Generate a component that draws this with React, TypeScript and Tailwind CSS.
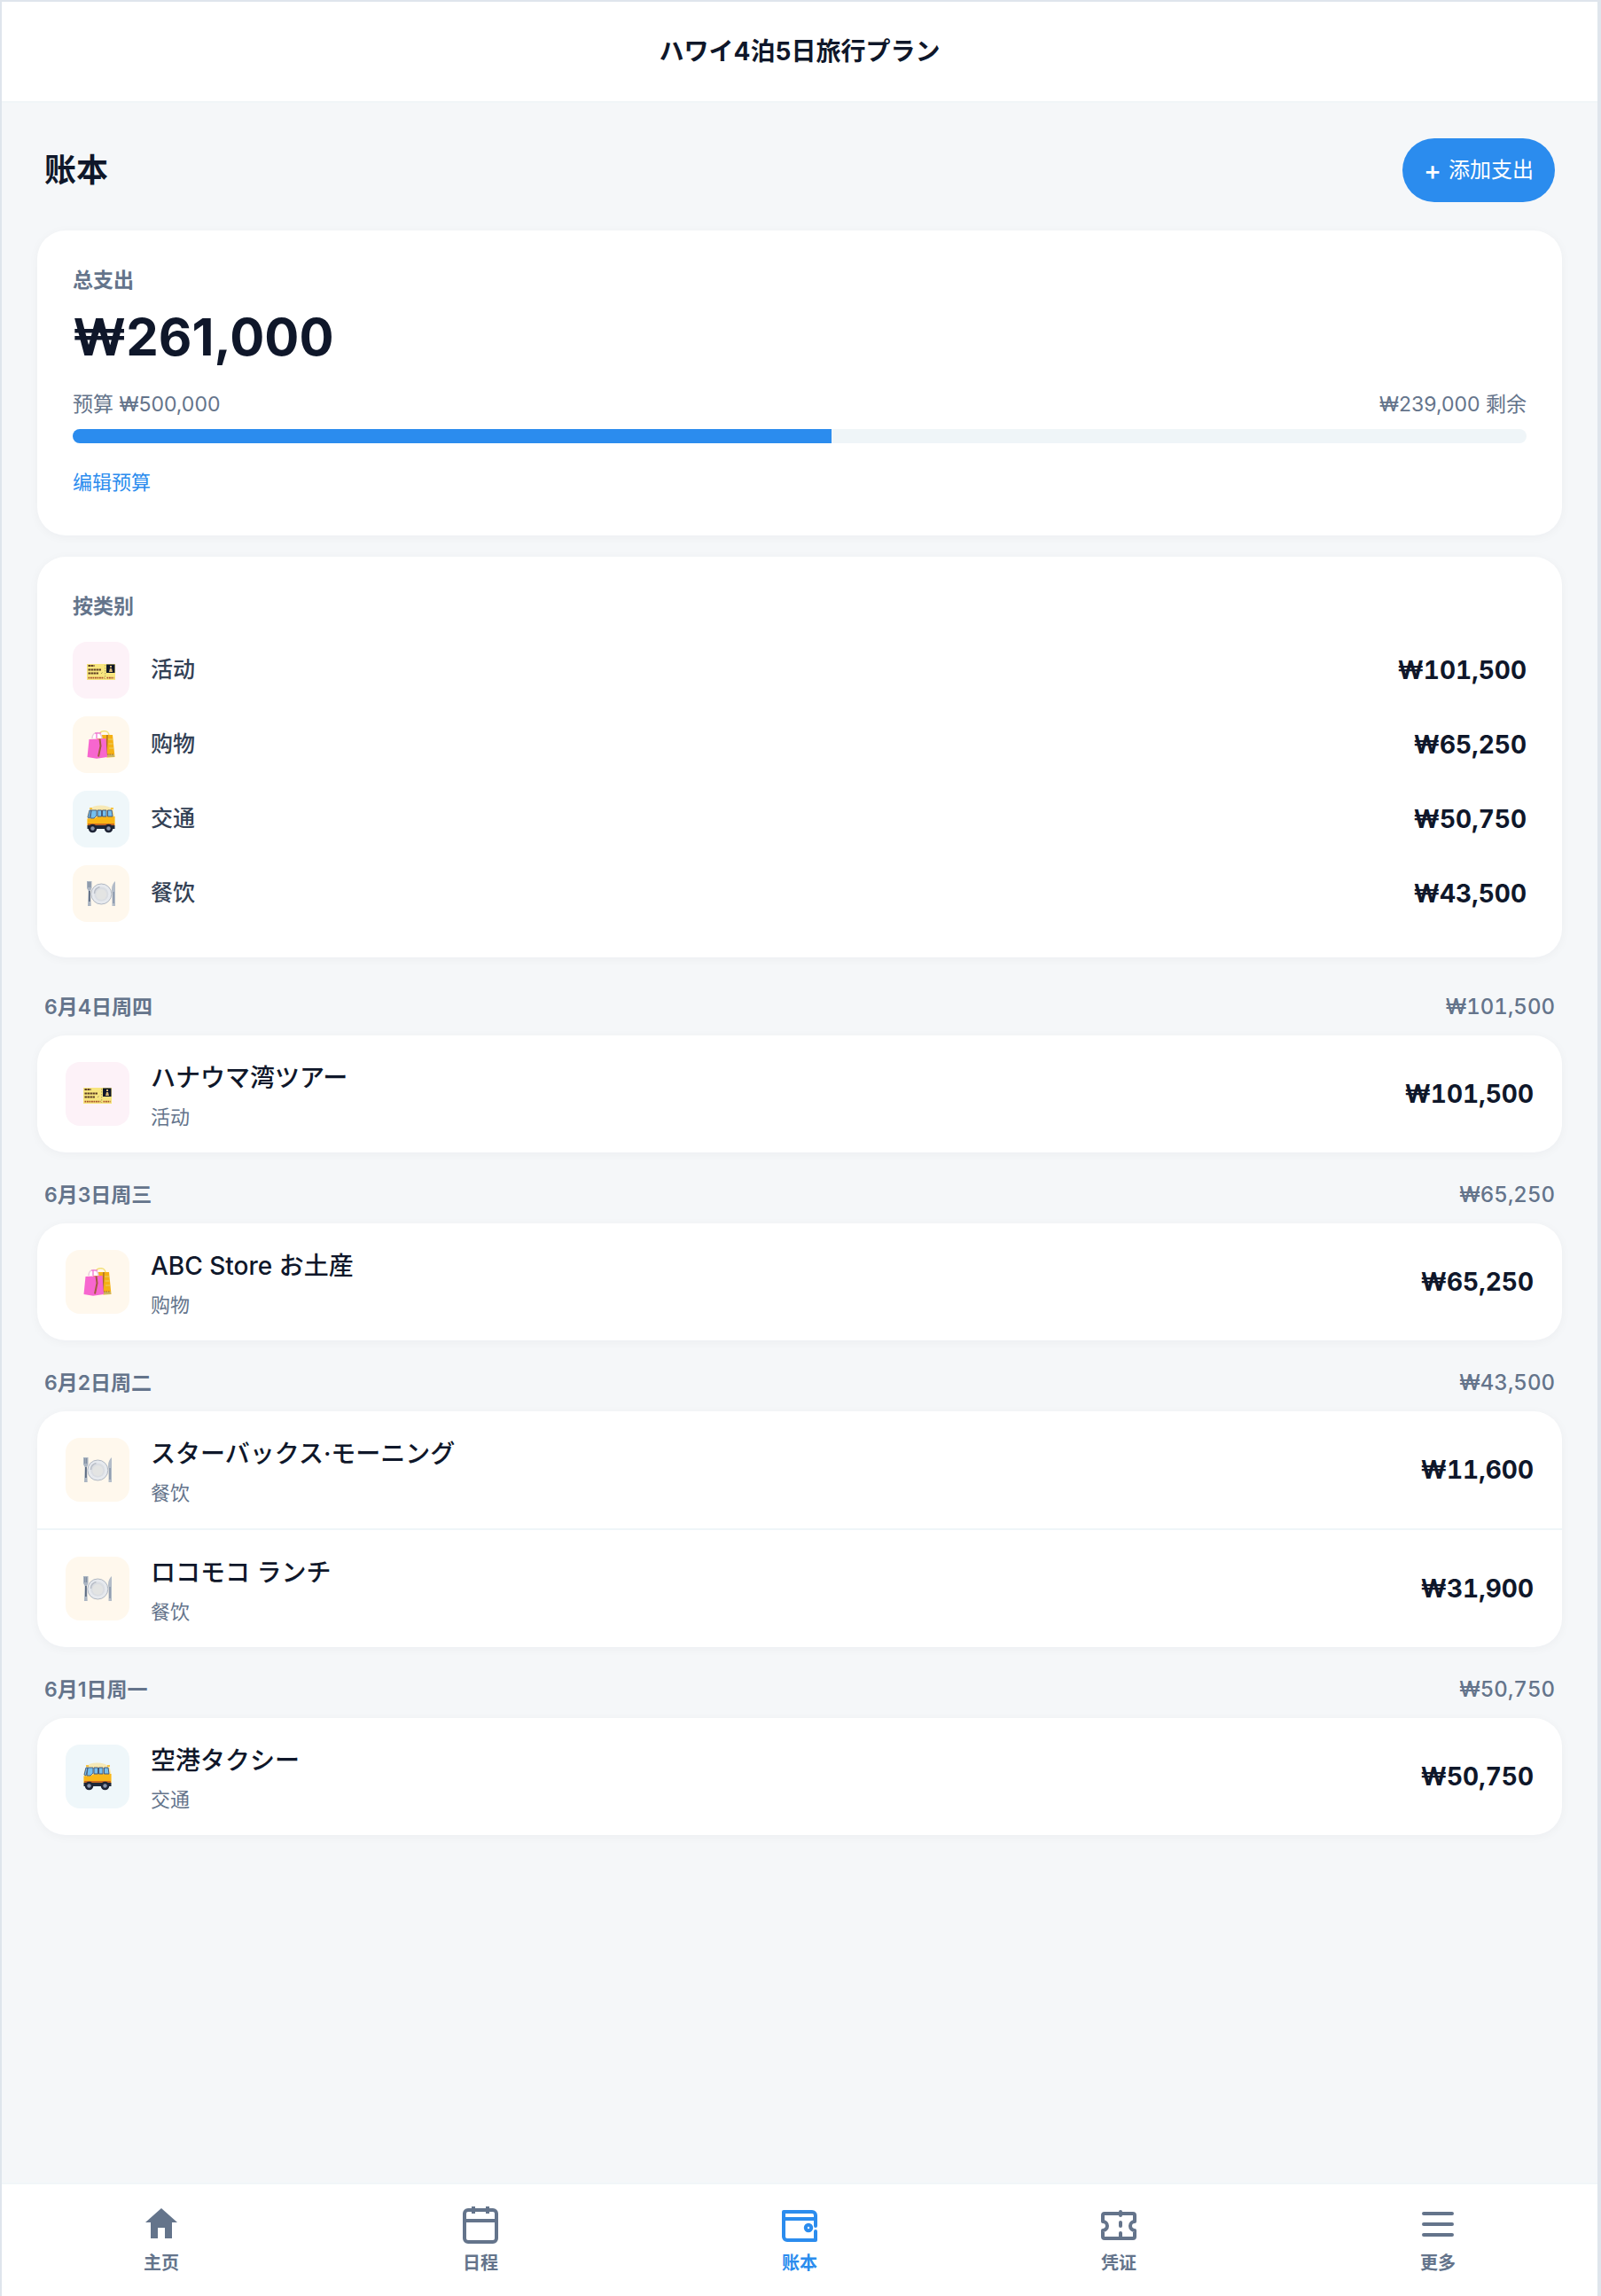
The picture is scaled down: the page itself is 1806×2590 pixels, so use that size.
import type { ReactNode } from "react";

type Category = "activity" | "shopping" | "transport" | "food";

const categories: Record<Category, { label: string; tint: string; icon: ReactNode }> = {
  activity: {
    label: "活动",
    tint: "bg-[#fdf2f8]",
    icon: (
      <svg viewBox="0 -2 32 32" className="w-full h-full" aria-hidden="true">
        <rect x="0" y="7" width="32" height="18" fill="#f7e57e" />
        <rect x="22" y="7.5" width="9.5" height="9.5" fill="#0f1729" />
        <path d="M25 16l1-4h2l1 4z M26 9h2v2h-2z" fill="#d9b878" />
        <path d="M1.500 9h7M1.500 13.500h15M1.500 17.500h12" stroke="#5b3a22" strokeWidth="2" strokeDasharray="2.4 .6" />
        <path d="M1.500 22.700h18M22.500 22.700h8" stroke="#a8502c" strokeWidth="1.8" strokeDasharray="1.8 .7" />
        <path d="M20.700 8v16" stroke="#9a8d50" strokeWidth=".8" strokeDasharray="1.5 1.5" />
        <path d="M16 18l1.500-1.500" stroke="#a79a58" />
      </svg>
    ),
  },
  shopping: {
    label: "购物",
    tint: "bg-[#fff8ed]",
    icon: (
      <svg viewBox="0 0 32 32" className="w-full h-full" aria-hidden="true">
        <path d="M13 6C15-1 25-1 25 6" fill="none" stroke="#f3e07a" strokeWidth="1.6" />
        <path d="M9 5h20l2.500 25-9 .5z" fill="#f5b014" />
        <path d="M23 5l-1 23" stroke="#a8682a" strokeWidth="1.4" />
        <path d="M24 10h5M24.500 15h5M25 20h5" stroke="#e8d06a" strokeWidth="1" />
        <path d="M22.500 27h8.500v3h-8.500z" fill="#cbb560" />
        <path d="M23 27h7" stroke="#a8682a" strokeDasharray="1.5 1" />
        <path d="M6 9C6 1 16 0 17 9" fill="#fff" stroke="#e9c9dc" strokeWidth="1.5" />
        <path d="M9 3h7M11 3v6" stroke="#f564cf" strokeWidth="1.2" />
        <path d="M2.500 10l19-1 1.500 21-12 1.800L.5 30z" fill="#f766cf" />
        <path d="M14.500 9.500l1 8-2.500 12" fill="none" stroke="#a45a3c" strokeWidth="2" />
      </svg>
    ),
  },
  transport: {
    label: "交通",
    tint: "bg-[#eff7fa]",
    icon: (
      <svg viewBox="0 0 32 32" className="w-full h-full" aria-hidden="true">
        <path d="M8 1.500Q16-.5 23 1.500L29 4H4z" fill="#f6e9b8" />
        <path d="M4 4h25q1.500 4 2.500 10v10H.5V14Q1 8 4 4z" fill="#fbe9a8" />
        <path d="M.5 15.500L9 15l3-2h19.500v10H.5z" fill="#f9b617" />
        <path d="M1 14l2-8h2l-2 9zM5 6h6v6l-3 3H4z" fill="#75bfee" stroke="#46597a" strokeWidth=".9" />
        <path d="M12 6h4.500v7H12zM17.500 6H22v7h-4.500zM23.500 6H28l1 7h-5.500z" fill="#75bfee" stroke="#46597a" strokeWidth="1" />
        <path d="M3 4h3M27 4h3" stroke="#f9b617" strokeWidth="1.6" />
        <path d="M.5 23h31v4H.5z" fill="#1e293b" />
        <path d="M1 22h30" stroke="#c96a22" strokeWidth="2" />
        <circle cx="6.5" cy="26.5" r="4.8" fill="#1e2435" />
        <circle cx="6.5" cy="26.5" r="2.2" fill="#8793ab" />
        <circle cx="24.5" cy="26.5" r="4.8" fill="#1e2435" />
        <circle cx="24.5" cy="26.5" r="2.2" fill="#8793ab" />
      </svg>
    ),
  },
  food: {
    label: "餐饮",
    tint: "bg-[#fff8ed]",
    icon: (
      <svg viewBox="0 0 32 32" className="w-full h-full" aria-hidden="true">
        <path d="M0 2h5.500v8L4 13l.7 17H1L1.700 13 0 10z" fill="#aab4c2" />
        <path d="M1.800 3v6M3.700 3v6" stroke="#66758a" strokeWidth=".7" />
        <path d="M2.900 13v12" stroke="#56657c" strokeWidth="1.6" />
        <path d="M28 12c0-5 1.500-8 4-10v28h-3.500V16z" fill="#b3bcc8" />
        <path d="M30 14v13" stroke="#7d8ca2" strokeWidth="1.2" />
        <circle cx="16.3" cy="16.5" r="11.5" fill="#e6e9ee" stroke="#a9b1bc" strokeWidth=".9" />
        <circle cx="16.3" cy="16.5" r="8" fill="#dadde2" />
        <path d="M8.500 16a8 8 0 0 1 6-7.500" fill="none" stroke="#b9bec7" strokeWidth="1.5" />
        <circle cx="16.3" cy="17" r="6" fill="#e3e4e3" />
      </svg>
    ),
  },
};

const totals: { category: Category; amount: number }[] = [
  { category: "activity", amount: 101500 },
  { category: "shopping", amount: 65250 },
  { category: "transport", amount: 50750 },
  { category: "food", amount: 43500 },
];

const days: { date: string; items: { title: string; category: Category; amount: number }[] }[] = [
  { date: "6月4日周四", items: [{ title: "ハナウマ湾ツアー", category: "activity", amount: 101500 }] },
  { date: "6月3日周三", items: [{ title: "ABC Store お土産", category: "shopping", amount: 65250 }] },
  {
    date: "6月2日周二",
    items: [
      { title: "スターバックス·モーニング", category: "food", amount: 11600 },
      { title: "ロコモコ ランチ", category: "food", amount: 31900 },
    ],
  },
  { date: "6月1日周一", items: [{ title: "空港タクシー", category: "transport", amount: 50750 }] },
];

const tabs = [
  {
    label: "主页",
    icon: <path d="M12 3l9 8h-3v9h-4v-6h-4v6H6v-9H3z" fill="currentColor" stroke="none" />,
  },
  {
    label: "日程",
    icon: (
      <>
        <rect x="3" y="4" width="18" height="18" rx="2" />
        <path d="M3 10h18M8 2v4M16 2v4" strokeLinecap="butt" />
      </>
    ),
  },
  {
    label: "账本",
    active: true,
    icon: (
      <>
        <path d="M21 13V7a2 2 0 0 0-2-2H3v14a2 2 0 0 0 2 2h16v-5" />
        <path d="M3 9h17" />
        <circle cx="17" cy="14" r="1.6" />
      </>
    ),
  },
  {
    label: "凭证",
    icon: (
      <>
        <path d="M3 10.500a2.500 2.500 0 0 1 0 5V19a1 1 0 0 0 1 1h16a1 1 0 0 0 1-1v-3.500a2.500 2.500 0 0 1 0-5V7a1 1 0 0 0-1-1H4a1 1 0 0 0-1 1z" />
        <path d="M13 5v2M13 11v2M13 17v2" />
      </>
    ),
  },
  { label: "更多", icon: <path d="M4 6h16M4 12h16M4 18h16" /> },
];

const won = (n: number) => "₩" + n.toLocaleString("en-US");

const budget = 500000;
const spent = totals.reduce((sum, t) => sum + t.amount, 0);

export default function App() {
  return (
    <div className="min-h-screen flex flex-col bg-[#f5f7f9] text-[#0f172a] border-t-2 border-l-2 border-r-4 border-[#dfe5ec] font-['Inter','Noto_Sans_CJK_SC',sans-serif]">
      <header className="h-[114px] shrink-0 bg-white border-b-2 border-[#f1f6f8] flex items-center justify-center">
        <h1 lang="ja" className="text-[28px] font-bold font-['Inter','Noto_Sans_CJK_JP',sans-serif]">ハワイ4泊5日旅行プラン</h1>
      </header>

      <main className="flex-1 px-10 pt-10">
        <div className="flex items-center justify-between px-2 mb-8">
          <h2 className="text-4xl font-bold">账本</h2>
          <button className="h-[72px] px-6 rounded-full bg-[#2b8cee] text-white text-2xl flex items-center gap-2">
            <span className="text-3xl font-medium">+</span>
            添加支出
          </button>
        </div>

        {/* Budget summary */}
        <section className="bg-white rounded-[32px] shadow-[0_2px_12px_rgba(15,23,42,0.04)] p-10 mb-6">
          <h3 className="text-[23px] leading-8 font-semibold text-[#64748b]">总支出</h3>
          <p className="text-[58px] leading-[72px] font-bold mt-3">{won(spent)}</p>
          <div className="flex justify-between text-[23px] leading-8 text-[#64748b] mt-6">
            <span>预算 {won(budget)}</span>
            <span>{won(budget - spent)} 剩余</span>
          </div>
          <div className="h-4 mt-3 rounded-full bg-[#eff5f8] overflow-hidden">
            <div className="h-full bg-[#2b8cee]" style={{ width: `${(spent / budget) * 100}%` }} />
          </div>
          <button className="block mt-6 text-[22px] leading-10 text-[#2b8cee]">编辑预算</button>
        </section>

        {/* Totals by category */}
        <section className="bg-white rounded-[32px] shadow-[0_2px_12px_rgba(15,23,42,0.04)] p-10">
          <h3 className="text-[23px] leading-8 font-semibold text-[#64748b] mb-6">按类别</h3>
          <ul className="flex flex-col gap-5">
            {totals.map((t) => (
              <li key={t.category} className="flex items-center gap-6">
                <span className={`size-16 rounded-2xl flex items-center justify-center ${categories[t.category].tint}`}>
                  <span className="size-8">{categories[t.category].icon}</span>
                </span>
                <span className="flex-1 text-[25px] font-medium text-[#334155]">{categories[t.category].label}</span>
                <span className="text-[28px] font-bold tabular-nums">{won(t.amount)}</span>
              </li>
            ))}
          </ul>
        </section>

        {/* Expenses grouped by day */}
        <div className="flex flex-col gap-8 pt-10 pb-10">
          {days.map((day) => (
            <section key={day.date}>
              <div className="flex justify-between px-2 mb-4 text-[23px] leading-8 text-[#64748b]">
                <h3 className="font-semibold">{day.date}</h3>
                <span className="text-2xl leading-8 font-medium tabular-nums">
                  {won(day.items.reduce((sum, i) => sum + i.amount, 0))}
                </span>
              </div>
              <ul className="bg-white rounded-[32px] shadow-[0_2px_12px_rgba(15,23,42,0.04)] divide-y-2 divide-[#eff5f8]">
                {day.items.map((item) => (
                  <li key={item.title} className="flex items-center gap-6 px-8 py-6">
                    <span className={`size-[72px] rounded-2xl flex items-center justify-center ${categories[item.category].tint}`}>
                      <span className="size-8">{categories[item.category].icon}</span>
                    </span>
                    <div className="flex-1">
                      <p lang="ja" className="text-[28px] leading-[48px] font-medium font-['Inter','Noto_Sans_CJK_JP',sans-serif]">{item.title}</p>
                      <p className="text-[22px] leading-8 mt-1 text-[#64748b]">{categories[item.category].label}</p>
                    </div>
                    <span className="text-[28px] font-bold tabular-nums">{won(item.amount)}</span>
                  </li>
                ))}
              </ul>
            </section>
          ))}
        </div>
      </main>

      <nav className="h-32 shrink-0 bg-white border-t-2 border-[#f1f6f8] grid grid-cols-5">
        {tabs.map((tab) => (
          <a
            key={tab.label}
            href="#"
            className={`flex flex-col items-center pt-[21px] gap-1 text-xl leading-8 font-semibold ${tab.active ? "text-[#2b8cee]" : "text-[#64748b]"}`}
          >
            <svg viewBox="0 0 24 24" className="size-12" fill="none" stroke="currentColor" strokeWidth="2" strokeLinecap="round" strokeLinejoin="round" aria-hidden="true">
              {tab.icon}
            </svg>
            {tab.label}
          </a>
        ))}
      </nav>
    </div>
  );
}
